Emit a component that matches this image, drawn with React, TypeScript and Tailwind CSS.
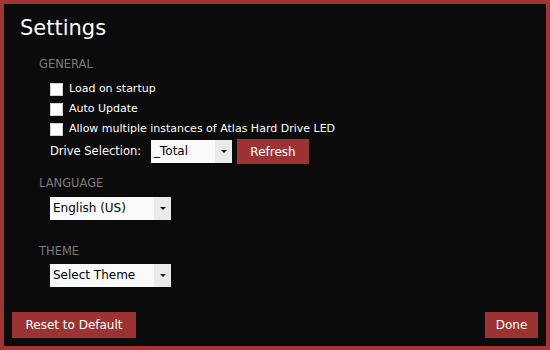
import React, { useState } from 'react';

const font = "font-['DejaVu_Sans',_Verdana,_sans-serif]";

const Checkbox: React.FC<{ label: string }> = ({ label }) => {
    const [checked, setChecked] = useState(false);
    return (
        <label className="flex items-center h-[20px] cursor-pointer">
            <span
                onClick={() => setChecked(!checked)}
                className="w-[13px] h-[13px] bg-white border border-[#d0d0d0] flex items-center justify-center text-[10px] leading-none text-black"
            >
                {checked ? '✓' : ''}
            </span>
            <span className="ml-[6px] text-[11px] leading-[14px] text-white">{label}</span>
        </label>
    );
};

const Select: React.FC<{ value: string; width: string }> = ({ value, width }) => (
    <div className={`flex h-[23px] bg-[#fafafa] ${width}`}>
        <span className="flex-1 pl-[3px] text-[12px] leading-[23px] text-black">{value}</span>
        <span className="w-[17px] bg-[#ebebeb] flex items-center justify-center">
            <svg width="6" height="3" viewBox="0 0 6 3">
                <path d="M0 0H6L3 3Z" fill="#111" />
            </svg>
        </span>
    </div>
);

const SectionLabel: React.FC<{ children: React.ReactNode }> = ({ children }) => (
    <div className="pl-[35px] text-[11.5px] leading-[14px] text-[#7a7a7a]">{children}</div>
);

export default function App() {
    return (
        <div className={`w-[550px] h-[350px] border-4 border-[#a13535] bg-[#0b0b0b] flex flex-col ${font}`}>
            <h1 className="pt-[10px] pl-[16px] text-[21px] leading-[28px] text-white">Settings</h1>

            <div className="mt-[15px]">
                <SectionLabel>GENERAL</SectionLabel>
                <div className="pl-[46px] mt-[8px] flex flex-col">
                    <Checkbox label="Load on startup" />
                    <Checkbox label="Auto Update" />
                    <Checkbox label="Allow multiple instances of Atlas Hard Drive LED" />
                    <div className="flex items-center h-[25px]">
                        <span className="w-[101px] text-[11.5px] text-white">Drive Selection:</span>
                        <Select value="_Total" width="w-[81px]" />
                        <button className="ml-[5px] w-[72px] h-[25px] bg-[#9b3333] text-white text-[12px]">Refresh</button>
                    </div>
                </div>
            </div>

            <div className="mt-[12px]">
                <SectionLabel>LANGUAGE</SectionLabel>
                <div className="pl-[46px] mt-[7px]">
                    <Select value="English (US)" width="w-[121px]" />
                </div>
            </div>

            <div className="mt-[24px]">
                <SectionLabel>THEME</SectionLabel>
                <div className="pl-[46px] mt-[6px]">
                    <Select value="Select Theme" width="w-[121px]" />
                </div>
            </div>

            <div className="mt-auto flex justify-between px-[8px] pb-[8px]">
                <button className="w-[124px] h-[26px] bg-[#9b3333] text-white text-[12px]">Reset to Default</button>
                <button className="w-[53px] h-[26px] bg-[#9b3333] text-white text-[12px]">Done</button>
            </div>
        </div>
    );
}
